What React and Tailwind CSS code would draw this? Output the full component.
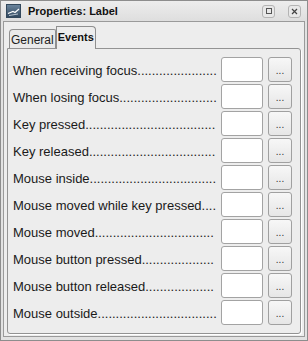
import React from 'react';

// label text and the number of leader dots that fill it out to the text box
const EVENTS = [
	['When receiving focus', 22],
	['When losing focus', 27],
	['Key pressed', 36],
	['Key released', 35],
	['Mouse inside', 35],
	['Mouse moved while key pressed', 4],
	['Mouse moved', 33],
	['Mouse button pressed', 20],
	['Mouse button released', 19],
	['Mouse outside', 33],
];

/**
 * Small window icon in the title bar
 */
const WindowIcon = () => (
	<svg width="15" height="14" viewBox="0 0 15 14" className="shrink-0">
		<defs>
			<linearGradient id="wi" x1="0" y1="0" x2="0" y2="1">
				<stop offset="0" stopColor="#6d879f" />
				<stop offset="1" stopColor="#2e455c" />
			</linearGradient>
		</defs>
		<rect x="0.5" y="0.5" width="14" height="13" fill="url(#wi)" stroke="#33485c" />
		<path d="M2 9.5 L7 7.5 L9 8.5 L13 5" stroke="#ffffff" strokeWidth="1.2" fill="none" />
		<path d="M3 11.5 L12 10" stroke="#d6e0ea" strokeWidth="0.8" fill="none" />
	</svg>
);

const TitleButton = ({ children }) => (
	<div className="w-[13px] h-[13px] rounded-[3px] border border-[#b4b4b4] bg-[#e8e8e8] flex items-center justify-center">
		{children}
	</div>
);

const EventRow = ({ label, dots }) => (
	<div className="flex items-center h-[25px]">
		<div className="flex-1 min-w-0 whitespace-nowrap pt-[2px] mr-[4px] text-[13px] leading-[16px] text-[#1a1a1a]">
			{label + '.'.repeat(dots)}
		</div>
		<div className="w-[42px] h-[25px] bg-white border border-[#a3a3a3] rounded-[3px]" />
		<button className="ml-[5px] w-[24px] h-[25px] p-0 pt-[3px] rounded-[3px] border border-[#a0a0a0] bg-gradient-to-b from-[#f7f7f7] to-[#e6e6e6] text-[10px] leading-[12px] text-[#333] text-center">
			...
		</button>
	</div>
);

export default function App() {
	return (
		<div
			className="w-[308px] h-[341px] border border-[#8d8d8d] bg-[#e2e2e2] flex flex-col"
			style={{ fontFamily: '"Liberation Sans", Arial, sans-serif' }}
		>
			{/* Title bar */}
			<div className="h-[20px] flex items-center pl-[5px] pr-[6px] bg-gradient-to-b from-[#ededed] to-[#dedede]">
				<WindowIcon />
				<span className="ml-[7px] text-[11px] font-bold text-[#111]">Properties: Label</span>
				<div className="ml-auto flex items-center gap-[13px]">
					<TitleButton>
						<div className="w-[6px] h-[6px] border border-[#555]" />
					</TitleButton>
					<TitleButton>
						<svg width="7" height="7" viewBox="0 0 7 7">
							<path d="M1 1 L6 6 M6 1 L1 6" stroke="#444" strokeWidth="1.2" />
						</svg>
					</TitleButton>
				</div>
			</div>

			{/* Body */}
			<div className="flex-1 mx-[2px] mb-[3px] border border-[#9a9a9a] bg-[#ededed] flex flex-col pl-[3px] pt-[4px]">
				{/* Tabs */}
				<div className="flex items-end pl-[2px] h-[22px]">
					<div className="h-[19px] px-[1px] border border-[#8f8f8f] border-b-0 rounded-tl-[4px] rounded-tr-[2px] bg-[#eaeaea] flex items-center text-[12px] text-[#222] pt-[1px]">
						General
					</div>
					<div className="relative z-10 -mb-px h-[23px] px-[1px] border border-[#8f8f8f] border-b-0 rounded-tr-[4px] bg-[#ededed] flex items-center text-[11px] font-bold text-[#111] pb-[1px]">
						Events
					</div>
				</div>

				{/* Panel */}
				<div className="w-[294px] h-[286px] border border-[#939393] rounded-b-[3px] rounded-tr-[3px] bg-[#ededed] shadow-[1px_1px_0_#ffffff] pl-[5px] pr-[8px] pt-[8px] flex flex-col gap-[2px]">
					{EVENTS.map(([label, dots]) => (
						<EventRow key={label} label={label} dots={dots} />
					))}
				</div>
			</div>
		</div>
	);
}
